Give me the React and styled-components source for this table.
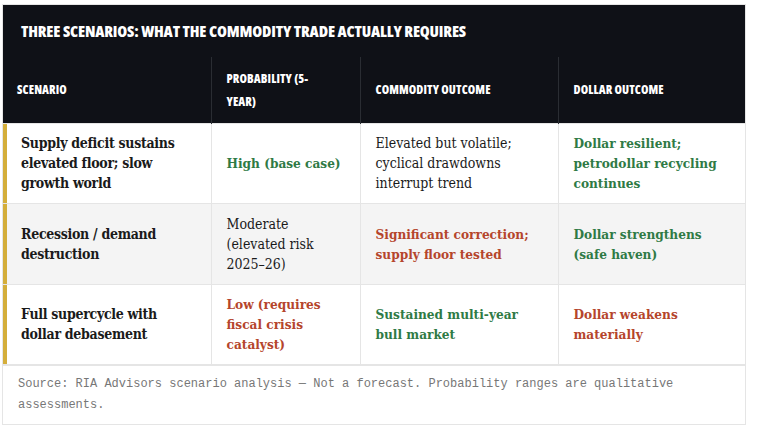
import React from "react";
import styled, { createGlobalStyle } from "styled-components";

const Global = createGlobalStyle`
  html, body { margin: 0; padding: 0; background: #ffffff; }
  body { font-family: "DejaVu Serif", serif; }
`;

const Figure = styled.figure`
  margin: 4px 0 0 2px;
  width: 744px;
  box-sizing: border-box;
  border: 1px solid #e5e5e5;
  background: #fff;
`;

const Title = styled.div`
  background: #0f1117;
  color: #fff;
  height: 52px;
  display: flex;
  align-items: center;
  padding-left: 18px;
  font-family: "Open Sans", "DejaVu Sans Condensed", sans-serif;
  font-stretch: 75%;
  font-weight: 800;
  font-size: 16px;
  letter-spacing: -0.15px;
`;

const Table = styled.table`
  width: 100%;
  border-collapse: collapse;
  table-layout: fixed;
  border-bottom: 2px solid #e5e5e5;
`;

const Th = styled.th`
  background: #0f1117;
  color: #fff;
  text-align: left;
  vertical-align: middle;
  height: 66px;
  padding: 0 ${(p) => (p.$wrapRight ? "30px" : "15px")} 0 15px;
  box-sizing: border-box;
  font-family: "Open Sans", "DejaVu Sans Condensed", sans-serif;
  font-stretch: 75%;
  font-weight: 800;
  font-size: 12px;
  line-height: 23px;
  letter-spacing: 0.1px;
  border-left: 1px solid #2a2d33;
  &:first-child { border-left: none; padding-left: 14px; }
`;

const Row = styled.tr`
  background: ${(p) => (p.$alt ? "#f4f4f4" : "#ffffff")};
`;

const toneColor = {
  green: "#2f7a45",
  red: "#b5452c",
};

const Td = styled.td`
  height: 80.5px;
  box-sizing: border-box;
  padding: 8px 15px;
  vertical-align: middle;
  font-family: "DejaVu Serif Condensed", "DejaVu Serif", serif;
  font-stretch: condensed;
  font-size: ${(p) => (p.$tone ? "13.5px" : "14px")};
  line-height: 20px;
  color: ${(p) => toneColor[p.$tone] || "#1a1a1a"};
  font-weight: ${(p) => (p.$tone ? 700 : 400)};
  border: 1px solid #e5e5e5;
`;

const ScenarioCell = styled.td`
  height: 80.5px;
  box-sizing: border-box;
  padding: 8px 12px 8px 18px;
  vertical-align: middle;
  font-family: "DejaVu Serif Condensed", "DejaVu Serif", serif;
  font-stretch: condensed;
  font-weight: 700;
  font-size: 14px;
  line-height: 20px;
  letter-spacing: -0.3px;
  color: #1a1a1a;
  border: 1px solid #e5e5e5;
  border-left: none;
  box-shadow: inset 4px 0 0 #d4ae3a;
`;

const Footer = styled.figcaption`
  padding: 8px 15px 8px;
  font-family: "Liberation Mono", monospace;
  font-size: 12px;
  line-height: 21px;
  color: #777;
`;

const rows = [
  {
    scenario: "Supply deficit sustains elevated floor; slow growth world",
    prob: ["High (base case)", "green"],
    commodity: ["Elevated but volatile; cyclical drawdowns interrupt trend", null],
    dollar: ["Dollar resilient; petrodollar recycling continues", "green"],
  },
  {
    scenario: "Recession / demand destruction",
    prob: ["Moderate (elevated risk 2025–26)", null],
    commodity: ["Significant correction; supply floor tested", "red"],
    dollar: ["Dollar strengthens (safe haven)", "green"],
  },
  {
    scenario: "Full supercycle with dollar debasement",
    prob: ["Low (requires fiscal crisis catalyst)", "red"],
    commodity: ["Sustained multi-year bull market", "green"],
    dollar: ["Dollar weakens materially", "red"],
  },
];

export default function App() {
  return (
    <>
      <Global />
      <Figure>
        <Title>THREE SCENARIOS: WHAT THE COMMODITY TRADE ACTUALLY REQUIRES</Title>
        <Table>
          <colgroup>
            <col style={{ width: 208 }} />
            <col style={{ width: 149 }} />
            <col style={{ width: 198 }} />
            <col style={{ width: 187 }} />
          </colgroup>
          <thead>
            <tr>
              <Th>SCENARIO</Th>
              <Th $wrapRight>PROBABILITY (5-YEAR)</Th>
              <Th>COMMODITY OUTCOME</Th>
              <Th>DOLLAR OUTCOME</Th>
            </tr>
          </thead>
          <tbody>
            {rows.map((r, i) => (
              <Row key={i} $alt={i === 1}>
                <ScenarioCell>{r.scenario}</ScenarioCell>
                <Td $tone={r.prob[1]}>{r.prob[0]}</Td>
                <Td $tone={r.commodity[1]}>{r.commodity[0]}</Td>
                <Td $tone={r.dollar[1]}>{r.dollar[0]}</Td>
              </Row>
            ))}
          </tbody>
        </Table>
        <Footer>
          Source: RIA Advisors scenario analysis — Not a forecast. Probability ranges are qualitative assessments.
        </Footer>
      </Figure>
    </>
  );
}
